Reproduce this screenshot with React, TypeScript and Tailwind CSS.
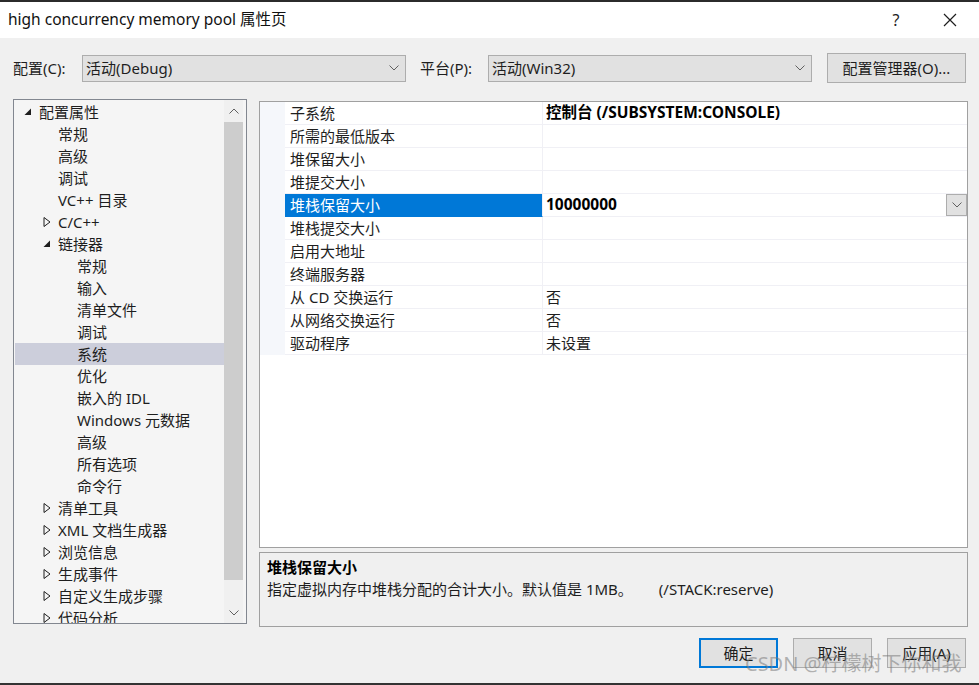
const TREE = [
  { label: '配置属性', level: 0, exp: 'open' },
  { label: '常规', level: 1 },
  { label: '高级', level: 1 },
  { label: '调试', level: 1 },
  { label: 'VC++ 目录', level: 1 },
  { label: 'C/C++', level: 1, exp: 'closed' },
  { label: '链接器', level: 1, exp: 'open' },
  { label: '常规', level: 2 },
  { label: '输入', level: 2 },
  { label: '清单文件', level: 2 },
  { label: '调试', level: 2 },
  { label: '系统', level: 2, selected: true },
  { label: '优化', level: 2 },
  { label: '嵌入的 IDL', level: 2 },
  { label: 'Windows 元数据', level: 2 },
  { label: '高级', level: 2 },
  { label: '所有选项', level: 2 },
  { label: '命令行', level: 2 },
  { label: '清单工具', level: 1, exp: 'closed' },
  { label: 'XML 文档生成器', level: 1, exp: 'closed' },
  { label: '浏览信息', level: 1, exp: 'closed' },
  { label: '生成事件', level: 1, exp: 'closed' },
  { label: '自定义生成步骤', level: 1, exp: 'closed' },
  { label: '代码分析', level: 1, exp: 'closed' },
]

const PROPS = [
  { name: '子系统', value: '控制台 (/SUBSYSTEM:CONSOLE)', bold: true },
  { name: '所需的最低版本', value: '' },
  { name: '堆保留大小', value: '' },
  { name: '堆提交大小', value: '' },
  { name: '堆栈保留大小', value: '10000000', bold: true, selected: true },
  { name: '堆栈提交大小', value: '' },
  { name: '启用大地址', value: '' },
  { name: '终端服务器', value: '' },
  { name: '从 CD 交换运行', value: '否' },
  { name: '从网络交换运行', value: '否' },
  { name: '驱动程序', value: '未设置' },
]

function Chevron({ className = '' }: { className?: string }) {
  return (
    <svg width="10" height="6" viewBox="0 0 10 6" className={className}>
      <polyline points="0.5,0.5 5,5 9.5,0.5" fill="none" stroke="#606060" strokeWidth="1" />
    </svg>
  )
}

function Combo({ text, width }: { text: string; width: string }) {
  return (
    <div className={`${width} h-[27px] bg-[#e1e1e1] border border-[#adadad] flex items-center pl-[3px] pr-[6px]`}>
      <span className="flex-1">{text}</span>
      <Chevron />
    </div>
  )
}

function Expander({ exp }: { exp?: string }) {
  if (exp === 'open')
    return (
      <svg width="8" height="8" viewBox="0 0 8 8">
        <polygon points="7,0.5 7,7 0.5,7" fill="#1e1e1e" />
      </svg>
    )
  if (exp === 'closed')
    return (
      <svg width="8" height="10" viewBox="0 0 8 10">
        <polygon points="1,0.5 7,5 1,9.5" fill="none" stroke="#1e1e1e" strokeWidth="1" />
      </svg>
    )
  return null
}

function Button({ label, primary }: { label: string; primary?: boolean }) {
  return (
    <div
      className={`w-[79px] h-[30px] bg-[#e1e1e1] flex items-center justify-center ${
        primary ? 'border-2 border-[#0078d7]' : 'border border-[#adadad]'
      }`}
    >
      {label}
    </div>
  )
}

export default function App() {
  return (
    <div className="relative w-[979px] h-[685px] bg-[#f0f0f0] flex flex-col overflow-hidden text-[15px] leading-none text-[#1e1e1e] font-[family-name:'Noto_Sans','Noto_Sans_CJK_SC',sans-serif]">
      <div className="h-[2px] bg-[#2b2b2b]" />
      {/* title bar */}
      <div className="h-[36px] bg-white flex items-center pl-[8px]">
        <span className="flex-1 text-[#111] text-[15.5px]">high concurrency memory pool 属性页</span>
        <span className="w-[20px] text-center mr-[37px] text-[16px]">?</span>
        <svg width="14" height="14" viewBox="0 0 14 14" className="mr-[22px]">
          <path d="M1 1 L13 13 M13 1 L1 13" stroke="#1e1e1e" strokeWidth="1.2" />
        </svg>
      </div>

      {/* config row */}
      <div className="mt-[15px] h-[30px] flex items-center pl-[13px]">
        <span className="w-[69px]">配置(C):</span>
        <Combo text="活动(Debug)" width="w-[324px]" />
        <span className="ml-[14px] w-[68px]">平台(P):</span>
        <Combo text="活动(Win32)" width="w-[324px]" />
        <div className="ml-[15px] w-[139px] h-[30px] bg-[#e1e1e1] border border-[#adadad] flex items-center justify-center">
          配置管理器(O)...
        </div>
      </div>

      <div className="flex pl-[13px] mt-[16px]">
        {/* tree */}
        <div className="w-[234px] h-[525px] border border-[#828790] bg-[#f5f5f5] flex overflow-hidden">
          <div className="flex-1 pt-[1px] pl-[1px]">
            {TREE.map((t, i) => (
              <div
                key={i}
                className={`h-[22px] flex items-center ${t.selected ? 'bg-[#cccedb]' : ''}`}
              >
                <div
                  className={`flex items-center justify-end pr-[7px] shrink-0 ${
                    t.level === 0 ? 'w-[24px]' : t.level === 1 ? 'w-[43px]' : 'w-[62px]'
                  }`}
                >
                  <Expander exp={t.exp} />
                </div>
                <span className="whitespace-nowrap">{t.label}</span>
              </div>
            ))}
          </div>
          <div className="w-[19px] mr-[3px] bg-[#f0f0f0] flex flex-col items-center">
            <div className="h-[22px] flex items-center">
              <Chevron className="rotate-180" />
            </div>
            <div className="w-[19px] h-[458px] bg-[#cdcdcd]" />
            <div className="flex-1 flex items-end pb-[7px]">
              <Chevron />
            </div>
          </div>
        </div>

        {/* right column */}
        <div className="ml-[12px] w-[709px] flex flex-col">
          <div className="mt-[2px] h-[447px] border border-[#a0a0a0] bg-white">
            {PROPS.map((p, i) => (
              <div key={i} className="h-[23px] flex">
                <div className="w-[25px] bg-[#f5f7fb]" />
                <div
                  className={`w-[258px] flex items-center pl-[5px] border-b border-r border-[#f0f0f5] ${
                    p.selected ? 'bg-[#0078d7] text-white border-b-[#0078d7]' : ''
                  }`}
                >
                  {p.name}
                </div>
                <div
                  className={`flex-1 flex items-center pl-[3px] border-b border-[#f0f0f5] ${
                    p.bold ? 'font-bold text-[#000] text-[15.5px]' : ''
                  }`}
                >
                  <span className="flex-1">{p.value}</span>
                  {p.selected && (
                    <div className="w-[21px] h-[22px] bg-[#e1e1e1] border border-[#adadad] flex items-center justify-center">
                      <Chevron />
                    </div>
                  )}
                </div>
              </div>
            ))}
          </div>
          <div className="mt-[4px] h-[75px] border border-[#a0a0a0] bg-[#f0f0f0] pl-[7px] pt-[7px]">
            <div className="font-bold text-[#000]">堆栈保留大小</div>
            <div className="mt-[7px] whitespace-nowrap">
              指定虚拟内存中堆栈分配的合计大小。默认值是 1MB。
              <span className="ml-[26px]">(/STACK:reserve)</span>
            </div>
          </div>
        </div>
      </div>

      {/* buttons */}
      <div className="mt-[11px] flex justify-end gap-[15px] pr-[13px]">
        <Button label="确定" primary />
        <Button label="取消" />
        <Button label="应用(A)" />
      </div>

      <div className="mt-auto h-[2px] bg-[#333]" />

      {/* watermark */}
      <div className="absolute left-[745px] top-[654px] text-[20px] text-[rgba(120,120,120,0.55)] whitespace-nowrap">
        CSDN @柠檬树下你和我
      </div>
    </div>
  )
}
